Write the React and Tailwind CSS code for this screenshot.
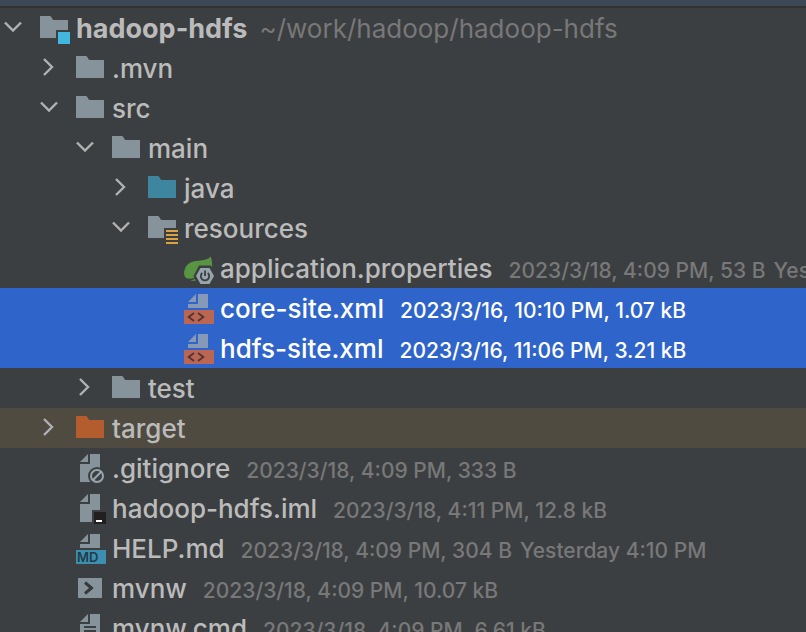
import { useState } from 'react'
import clsx from 'clsx'

const items = [
  { id: 'root', name: 'hadoop-hdfs', depth: 0, icon: 'module', open: true, bold: true, path: '~/work/hadoop/hadoop-hdfs' },
  { id: 'mvn', name: '.mvn', depth: 1, icon: 'folder', open: false },
  { id: 'src', name: 'src', depth: 1, icon: 'folder', open: true },
  { id: 'main', name: 'main', depth: 2, icon: 'folder', open: true },
  { id: 'java', name: 'java', depth: 3, icon: 'sources', open: false },
  { id: 'resources', name: 'resources', depth: 3, icon: 'resources', open: true },
  { id: 'props', name: 'application.properties', depth: 4, icon: 'spring', meta: '2023/3/18, 4:09 PM, 53 B', visited: 'Yesterday 4:10 PM' },
  { id: 'core', name: 'core-site.xml', depth: 4, icon: 'xml', meta: '2023/3/16, 10:10 PM, 1.07 kB', selected: true },
  { id: 'hdfs', name: 'hdfs-site.xml', depth: 4, icon: 'xml', meta: '2023/3/16, 11:06 PM, 3.21 kB', selected: true },
  { id: 'test', name: 'test', depth: 2, icon: 'folder', open: false },
  { id: 'target', name: 'target', depth: 1, icon: 'excluded', open: false, excluded: true },
  { id: 'gitignore', name: '.gitignore', depth: 1, icon: 'ignore', meta: '2023/3/18, 4:09 PM, 333 B' },
  { id: 'iml', name: 'hadoop-hdfs.iml', depth: 1, icon: 'iml', meta: '2023/3/18, 4:11 PM, 12.8 kB' },
  { id: 'help', name: 'HELP.md', depth: 1, icon: 'markdown', meta: '2023/3/18, 4:09 PM, 304 B', visited: 'Yesterday 4:10 PM' },
  { id: 'mvnw', name: 'mvnw', depth: 1, icon: 'shell', meta: '2023/3/18, 4:09 PM, 10.07 kB' },
  { id: 'mvnwcmd', name: 'mvnw.cmd', depth: 1, icon: 'text', meta: '2023/3/18, 4:09 PM, 6.61 kB' },
]

const indents = ['pl-0', 'pl-9', 'pl-18', 'pl-27', 'pl-36']

const FOLDER = 'M2 4h10c1.6 0 2 4 4 4h14v18H2z'
const FOLDER_CUT = 'M2 4h10c1.6 0 2 4 4 4h14v10H18v8H2z'

function FileIcon({ type }) {
  return (
    <svg viewBox="0 0 32 32" className="w-8 h-8 shrink-0" aria-hidden="true">
      {type === 'folder' && <path d={FOLDER} fill="#87939a" />}
      {type === 'sources' && <path d={FOLDER} fill="#3e86a0" />}
      {type === 'excluded' && <path d={FOLDER} fill="#b35c2e" />}
      {type === 'module' && (
        <>
          <path d={FOLDER_CUT} fill="#87939a" />
          <path d="M20 20h12v12H20z" fill="#40b6e0" />
        </>
      )}
      {type === 'resources' && (
        <>
          <path d="M2 4h10c1.6 0 2 4 4 4h14v8H18v10H2z" fill="#87939a" />
          <path d="M20 18h12v2H20zM20 22h12v2H20zM20 26h12v2H20zM20 30h12v2H20z" fill="#d9a343" />
        </>
      )}
      {type === 'spring' && (
        <>
          <path d="M28.800 4.500c1.600 6 1.800 9.500.8 12.500L18 16l-6 10c-3 1-6 1-8 0-2-2-2.500-5-1.500-8C5 9.500 12 9 19 8.500c4-.3 7.500-1.500 9.800-4z" fill="#589442" />
          <path d="M6.500 28.800c2.500 0 4-.6 6-2l1.500 2z" fill="#589442" />
          <path d="M17 13.500h12l5 10.500-5 10H17l-5.500-10z" fill="#3c3f41" />
          <path d="M18.500 16h9L32 24l-4.500 8h-9L14 24z" fill="#97a5ae" />
          <path d="M20.300 21a4.200 4.200 0 1 0 5.400 0M23 18.500v5.500" fill="none" stroke="#3c3f41" strokeWidth="1.800" />
        </>
      )}
      {type === 'xml' && (
        <>
          <path d="M14 2v8H6zM16 2h10v14H6v-4h10z" fill="#869ab7" />
          <path d="M2 18h30v14H2z" fill="#bb6652" />
          <path d="M12 21l-5.300 4 5.300 4M16 21l5.300 4-5.300 4" fill="none" stroke="#4f3436" strokeWidth="1.800" />
        </>
      )}
      {type === 'ignore' && (
        <>
          <path d="M14 2v8H6zM16 2h10v28H6V12h10z" fill="#87939a" />
          <circle cx="23" cy="24" r="9" fill="#3c3f41" />
          <circle cx="23" cy="24" r="6" fill="none" stroke="#97a5ae" strokeWidth="2" />
          <path d="M18.800 28.200l8.400-8.400" stroke="#97a5ae" strokeWidth="2" />
        </>
      )}
      {type === 'iml' && (
        <>
          <path d="M14 2v8H6zM16 2h10v16h-8v12H6V12h10z" fill="#87939a" />
          <path d="M20 20h12v12H20z" fill="#231f20" />
          <path d="M22 28h6v2h-6z" fill="#fff" />
        </>
      )}
      {type === 'markdown' && (
        <>
          <path d="M14 2v8H6zM16 2h10v14H6v-4h10z" fill="#87939a" />
          <path d="M2 18h30v14H2z" fill="#3d8fb0" />
          <text x="3" y="30" fontSize="13" fontWeight="600" fontFamily="Inter, sans-serif" fill="#233b47">MD</text>
        </>
      )}
      {type === 'shell' && (
        <>
          <path d="M4 6h24v20H4z" fill="#87939a" />
          <path d="M11 10.500l6.500 5.500-6.500 5.500" fill="none" stroke="#36393b" strokeWidth="3" />
        </>
      )}
      {type === 'text' && (
        <>
          <path d="M14 2v8H6zM16 2h10v28H6V12h10z" fill="#87939a" />
          <path d="M10 14h12v2H10zM10 18h12v2H10zM10 22h8v2h-8z" fill="#3c3f41" />
        </>
      )}
    </svg>
  )
}

function Chevron({ open }) {
  return (
    <svg viewBox="0 0 26 32" className="w-full h-8" fill="none" stroke="#afb1b3" strokeWidth="2.400" aria-hidden="true">
      {open ? <path d="M5 10.500l8 8 8-8" /> : <path d="M8 7l8 8-8 8" />}
    </svg>
  )
}

function Row({ item, selected, onSelect, onToggle }) {
  const isFolder = item.open !== undefined

  return (
    <li
      role="treeitem"
      aria-level={item.depth + 1}
      aria-selected={selected}
      aria-expanded={item.open}
      onClick={onSelect}
      className={clsx(
        'flex items-center h-10 cursor-default',
        indents[item.depth],
        selected ? 'bg-[#2f65ca] text-white' : 'text-[#bbbbbb]',
        !selected && item.excluded && 'bg-[#4f4b41]'
      )}
    >
      <div className="w-[26px] mr-3 shrink-0">
        {isFolder && (
          <button type="button" onClick={onToggle} aria-label={`Toggle ${item.name}`} className="block w-full">
            <Chevron open={item.open} />
          </button>
        )}
      </div>
      <FileIcon type={item.icon} />
      <div className="flex items-baseline ml-1.5 pt-0.5">
        <span className={clsx('leading-10', item.bold ? 'text-[27px] font-bold' : 'text-[26px] font-medium')}>{item.name}</span>
        {item.path && <span className="ml-3 text-[26px] text-[#787878]">{item.path}</span>}
        {item.meta && (
          <span className={clsx('ml-4 text-[21px] font-medium', !selected && 'text-[#787878]')}>{item.meta}</span>
        )}
        {item.visited && <span className="ml-2 text-[21px] font-medium text-[#787878]">{item.visited}</span>}
      </div>
    </li>
  )
}

export default function App() {
  const [closed, setClosed] = useState(items.filter(i => i.open === false).map(i => i.id))
  const [selected, setSelected] = useState(items.filter(i => i.selected).map(i => i.id))

  const toggle = (e, id) => {
    e.stopPropagation()
    setClosed(closed.includes(id) ? closed.filter(c => c !== id) : [...closed, id])
  }

  // hide everything nested under a closed folder
  const visible = []
  let hiddenBelow = Infinity
  for (const item of items) {
    if (item.depth > hiddenBelow) continue
    const open = item.open === undefined ? undefined : !closed.includes(item.id)
    hiddenBelow = open === false ? item.depth : Infinity
    visible.push({ ...item, open })
  }

  return (
    <div className="h-screen overflow-hidden bg-[#3c3f41] font-['Inter',sans-serif] whitespace-nowrap select-none">
      <div className="h-2 bg-[#3d4857] border-b-2 border-[#323232]" />
      <ul role="tree" aria-label="Project">
        {visible.map(item => (
          <Row
            key={item.id}
            item={item}
            selected={selected.includes(item.id)}
            onSelect={() => setSelected([item.id])}
            onToggle={e => toggle(e, item.id)}
          />
        ))}
      </ul>
    </div>
  )
}
